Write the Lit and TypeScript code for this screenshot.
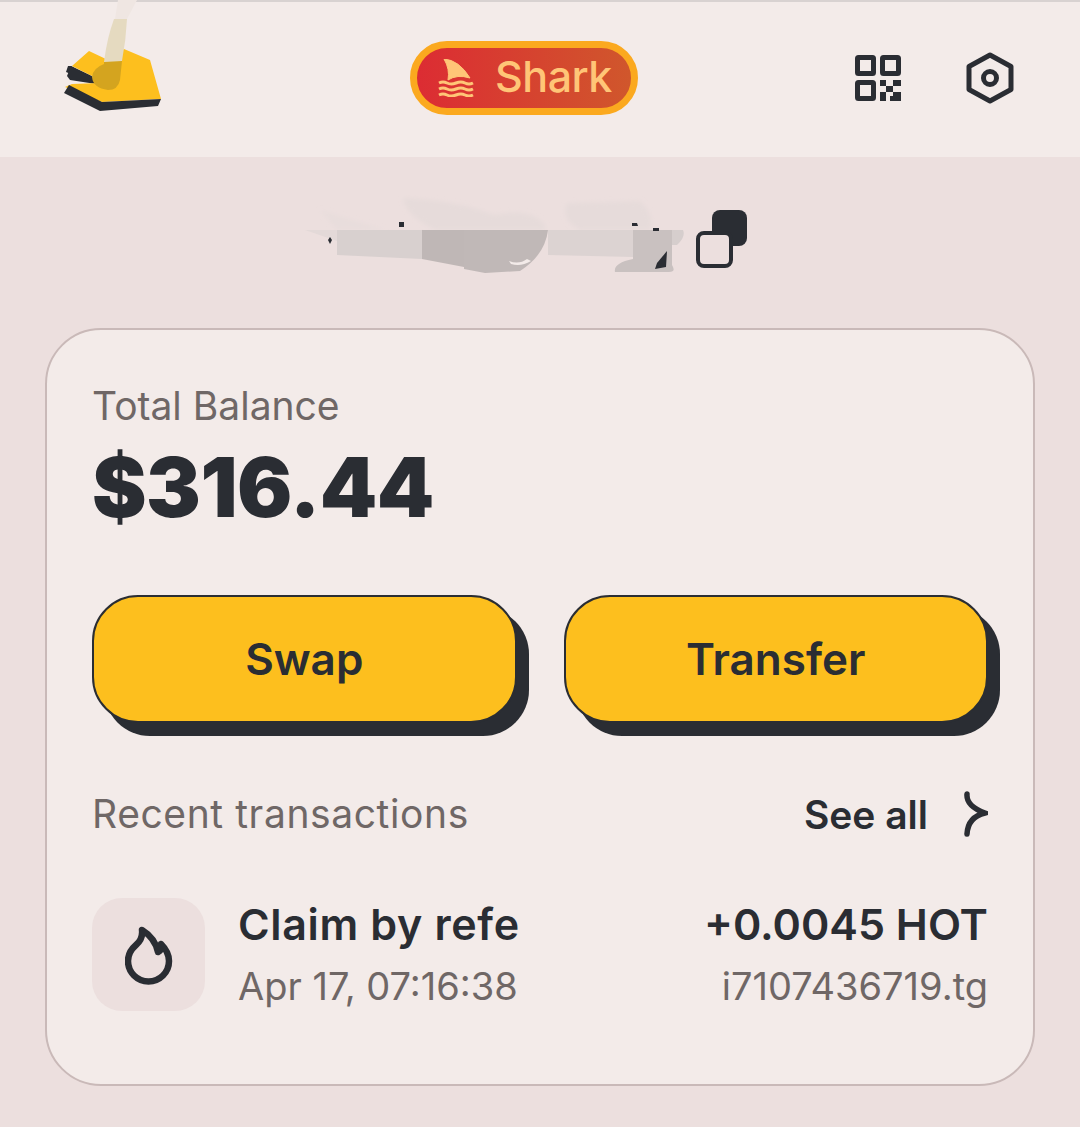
import { LitElement, html, css, svg } from 'lit';
import { customElement } from 'lit/decorators.js';

const logo = svg`
  <svg class="logo" width="140" height="130" viewBox="40 0 140 130">
    <path d="M68 66 L71 66 L95 80 L92 83 L66 72 Z" fill="#2a2d33" />
    <path d="M67 76 L71 66 L90 75 L98 80 L96 84 L70 80 Z" fill="#2a2d33" />
    <path d="M65 87 L72 84 L100 83 L96 78 L72 66 L89 51 L108 60 L124 49 L150 60 L161 99 L102 102 Z" fill="#fdbf1e" />
    <path d="M64 93 L69 85 L102 102 L161 99 L158 106 L100 111 Z" fill="#2a2d33" />
    <path d="M104 61 L122 61 L120 80 Q118 90 108 90 Q93 88 92 77 Q93 68 104 64 Z" fill="#d4a41f" />
    <path d="M104 62 Q107 38 114 19 L127 19 Q126 40 122 61 Z" fill="#e5dac0" />
    <path d="M115 19 L118 0 L137 0 L127 19 Z" fill="#efe6e2" />
  </svg>`;

const fin = svg`
  <svg width="38" height="38" viewBox="0 0 38 38">
    <path d="M7 0 Q22 1 33 19 Q20 15 11 21 Q13 10 7 0 Z" fill="#ffc577" stroke="#ffc577" stroke-linejoin="round" />
    <path d="M2 24 Q6 22 10 24 T19 24 T28 24 T36 24 M2 30 Q6 28 10 30 T19 30 T28 30 T36 30 M2 36 Q6 34 10 36 T19 36 T28 36 T36 36" fill="none" stroke="#ffc577" stroke-width="3" />
  </svg>`;

const qr = svg`
  <svg width="46" height="46" viewBox="0 0 46 46" fill="none" stroke="#2a2d33" stroke-width="5">
    <rect x="2.5" y="2.5" width="16" height="16" rx="1" />
    <rect x="27.5" y="2.5" width="16" height="16" rx="1" />
    <rect x="2.5" y="27.5" width="16" height="16" rx="1" />
    <path d="M25 25h6v6h-6zM38 25h8v6h-8zM31 31h7v6h-7zM25 37h6v9h-6zM38 37h8v9h-8z" fill="#2a2d33" stroke="none" />
    <path d="M35 41h3v5h-3z" fill="#2a2d33" stroke="none" />
  </svg>`;

const hex = svg`
  <svg width="50" height="52" viewBox="0 0 50 52" fill="none" stroke="#2a2d33" stroke-width="5">
    <path d="M25 3 L46 14.5 V37.5 L25 49 L4 37.5 V14.5 Z" stroke-linejoin="round" />
    <circle cx="25" cy="26" r="6.5" />
  </svg>`;

// blurred redaction over the address, coords are page minus (305, 195)
const smudge = svg`
  <svg class="smudge" width="391" height="82" viewBox="0 0 391 82">
    <defs>
      <filter id="soft" x="-10%" y="-30%" width="120%" height="160%">
        <feGaussianBlur stdDeviation="2" />
      </filter>
    </defs>
    <g filter="url(#soft)">
      <path d="M15 15 L80 35 L32 35 Z" fill="#e8dddc" />
      <path d="M98 3 Q150 5 190 20 Q225 12 240 30 L240 35 L130 35 Q100 20 98 3 Z" fill="#e6dbda" />
      <path d="M262 8 L335 6 Q350 20 345 35 L275 35 Q255 25 262 8 Z" fill="#e6dbda" />
    </g>
    <path d="M0 35 H378 Q381 42 372 50 L340 50 L340 35 Z" fill="#d6cecd" />
    <path d="M0 35 H32 V46 Z" fill="#e3d9d8" />
    <path d="M32 35 H117 V64 L32 60 Z" fill="#d8d0cf" />
    <path d="M117 35 H159 V72 L117 64 Z" fill="#bfb7b6" />
    <path d="M159 35 H243 Q240 60 215 76 L180 78 L159 74 Z" fill="#c0b8b7" />
    <path d="M243 35 H328 V62 L243 60 Z" fill="#dcd3d2" />
    <path d="M328 35 H367 V70 Q372 78 362 77 H310 Q308 68 328 64 Z" fill="#c9c1c0" />
    <path d="M352 68 L362 56 L361 72 L350 74 Z" fill="#2a2d33" />
    <path d="M23 45 l2 -3 l2 3 l-2 4 Z" fill="#2a2d33" />
    <path d="M94 27 h5 v5 h-5 Z" fill="#2a2d33" />
    <path d="M327 28 h5 l1 3 h-6 Z" fill="#2a2d33" />
    <path d="M348 33 h6 v3 h-6 Z" fill="#2a2d33" />
    <path d="M204 66 q10 4 18 -2 l4 2 q-10 6 -20 3 Z" fill="#f3ebe9" />
  </svg>`;

const copy = svg`
  <svg width="52" height="58" viewBox="0 0 52 58">
    <rect x="17" y="0" width="35" height="36" rx="8" fill="#2a2d33" />
    <rect x="3" y="23" width="33" height="33" rx="6" fill="#ecdfde" stroke="#2a2d33" stroke-width="4" />
  </svg>`;

const chevron = svg`
  <svg width="26" height="46" viewBox="0 0 26 46" fill="none" stroke="#2a2d33" stroke-width="5.5" stroke-linecap="round">
    <path d="M5 3 Q4 15 23 22 Q6 26 5 43" />
  </svg>`;

const flame = svg`
  <svg width="48" height="60" viewBox="0 0 48 60" fill="none" stroke="#2a2d33" stroke-width="6.5" stroke-linejoin="round">
    <path d="M17 5 Q30 13 33 27 Q37 25 36 19 Q44 27 44 36 A20.5 20.5 0 0 1 3 36 Q3 27 11 20 Q18 14 17 5 Z" />
  </svg>`;

@customElement('app-root')
export class AppRoot extends LitElement {
  static styles = css`
    :host {
      display: block;
      width: 1080px;
      height: 1127px;
      background: #ecdfde;
      font-family: 'Inter', 'Noto Sans', sans-serif;
      color: #2a2d33;
      overflow: hidden;
    }

    .header {
      height: 157px;
      box-sizing: border-box;
      background: #f3ebe9;
      border-top: 2px solid #d8d2d1;
      display: grid;
      grid-template-columns: 346px auto 1fr;
      align-items: center;
      padding: 0 65px 4px 64px;
    }

    .logo-wrap {
      align-self: start;
      height: 130px;
    }

    .logo {
      display: block;
      margin: -2px 0 0 -24px;
    }

    .pill {
      width: 228px;
      height: 74px;
      box-sizing: border-box;
      border: 7px solid #fba91f;
      border-radius: 37px;
      background: linear-gradient(90deg, #dc2c33, #d0572c);
      display: flex;
      align-items: center;
      gap: 20px;
      padding-left: 20px;
      color: #ffc577;
      font-size: 43px;
      font-weight: 500;
      letter-spacing: -0.5px;
    }

    .pill span {
      margin-top: -4px;
    }

    .actions {
      display: flex;
      justify-content: flex-end;
      align-items: center;
      gap: 64px;
    }

    .address {
      height: 172px;
      box-sizing: border-box;
      display: flex;
      align-items: center;
      padding: 0 0 8px 305px;
    }

    .smudge {
      align-self: flex-start;
      margin: 38px -1px 0 0;
    }

    .card {
      margin: -1px 45px 0;
      height: 758px;
      box-sizing: border-box;
      border: 2px solid #c9b9b8;
      border-radius: 56px;
      background: #f3ebe9;
      padding: 51px 45px 0;
    }

    .label {
      font-size: 39px;
      line-height: 50px;
      color: #6f6766;
    }

    .label.wide {
      letter-spacing: 0.6px;
    }

    .balance {
      font-size: 82px;
      line-height: 96px;
      font-weight: 900;
      letter-spacing: -0.5px;
      margin-top: 9px;
    }

    .buttons {
      display: grid;
      grid-template-columns: 1fr 1fr;
      gap: 47px;
      margin-top: 59px;
    }

    .btn {
      height: 128px;
      box-sizing: border-box;
      border: 2px solid #2a2d33;
      border-radius: 46px;
      background: #fdbf1e;
      box-shadow: 12px 13px 0 #2a2d33;
      display: flex;
      align-items: center;
      justify-content: center;
      font-size: 44px;
      font-weight: 600;
    }

    .section {
      display: flex;
      justify-content: space-between;
      align-items: center;
      margin-top: 66px;
    }

    .see-all {
      display: flex;
      align-items: center;
      gap: 34px;
      font-size: 39px;
      font-weight: 600;
    }

    .tx {
      display: flex;
      align-items: center;
      margin-top: 59px;
    }

    .tile {
      width: 113px;
      height: 113px;
      border-radius: 30px;
      background: #ecdfde;
      display: flex;
      align-items: center;
      justify-content: center;
      margin-right: 33px;
    }

    .tx-main {
      flex: 1;
    }

    .tx-main .title {
      letter-spacing: 0.65px;
    }

    .tx-end {
      text-align: right;
    }

    .title {
      font-size: 43px;
      line-height: 54px;
      font-weight: 600;
      margin-top: -2px;
    }

    .sub {
      font-size: 38px;
      line-height: 50px;
      margin-top: 10px;
      color: #6f6766;
    }
  `;

  render() {
    return html`
      <div class="header">
        <div class="logo-wrap">${logo}</div>
        <div class="pill">${fin}<span>Shark</span></div>
        <div class="actions">${qr}${hex}</div>
      </div>
      <div class="address">${smudge}${copy}</div>
      <div class="card">
        <div class="label">Total Balance</div>
        <div class="balance">$316.44</div>
        <div class="buttons">
          <div class="btn">Swap</div>
          <div class="btn">Transfer</div>
        </div>
        <div class="section">
          <div class="label wide">Recent transactions</div>
          <div class="see-all">See all ${chevron}</div>
        </div>
        <div class="tx">
          <div class="tile">${flame}</div>
          <div class="tx-main">
            <div class="title">Claim by refe</div>
            <div class="sub">Apr 17, 07:16:38</div>
          </div>
          <div class="tx-end">
            <div class="title">+0.0045 HOT</div>
            <div class="sub">i7107436719.tg</div>
          </div>
        </div>
      </div>
    `;
  }
}
